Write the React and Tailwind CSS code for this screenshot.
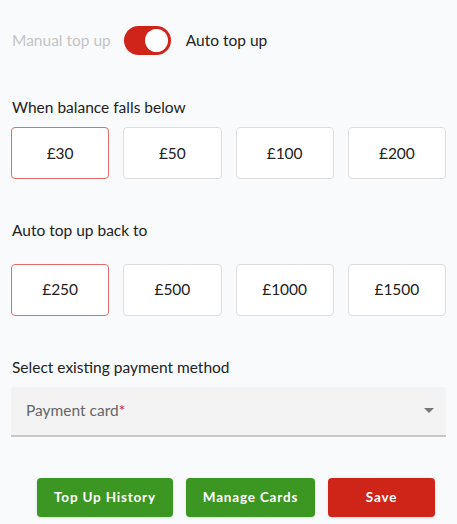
import React from "react";

const Box = ({ label, selected }) => (
  <div
    className={`flex h-[52px] items-center justify-center rounded-[4px] border bg-white text-[15.5px] text-[#222] ${
      selected ? "border-[#e06b6b]" : "border-[#dedede]"
    }`}
  >
    {label}
  </div>
);

export default function App() {
  return (
    <div
      className="min-h-[524px] w-[457px] bg-[#f9fafc] px-[11px] text-[15.5px]"
      style={{ fontFamily: "Lato, 'Open Sans', sans-serif" }}
    >
      <div className="flex items-center pt-[26px]">
        <span className="ml-px text-[#c4c4c4]">Manual top up</span>
        <div className="ml-[13px] flex h-[29px] w-[47px] items-center justify-end rounded-full bg-[#d0241a] pr-[3px]">
          <div className="h-[23px] w-[23px] rounded-full bg-white" />
        </div>
        <span className="ml-[15px] text-[#222]">Auto top up</span>
      </div>

      <div className="mt-[41px] ml-px text-[#222]">When balance falls below</div>
      <div className="mt-[8px] grid grid-cols-4 gap-[14px]">
        <Box label="£30" selected />
        <Box label="£50" />
        <Box label="£100" />
        <Box label="£200" />
      </div>

      <div className="mt-[40px] ml-px text-[#222]">Auto top up back to</div>
      <div className="mt-[21px] grid grid-cols-4 gap-[14px]">
        <Box label="£250" selected />
        <Box label="£500" />
        <Box label="£1000" />
        <Box label="£1500" />
      </div>

      <div className="mt-[40px] ml-px text-[#222]">Select existing payment method</div>
      <div className="mt-[8px] flex h-[50px] items-center justify-between rounded-t-[4px] border-b-2 border-[#c8c8c8] bg-[#f3f3f3] pl-[15px] pr-[12px]">
        <span className="text-[#666]">
          Payment card<span className="text-[#d0241a]">*</span>
        </span>
        <svg width="10" height="5" viewBox="0 0 10 5">
          <path d="M0 0 L10 0 L5 5 Z" fill="#777" />
        </svg>
      </div>

      <div className="mt-[41px] flex justify-end gap-[13px] pr-[11px]">
        <button className="h-[39px] w-[136px] rounded-[4px] bg-[#3c9622] text-[13.5px] font-bold tracking-[0.06em] text-white shadow-sm">
          Top Up History
        </button>
        <button className="h-[39px] w-[129px] rounded-[4px] bg-[#3c9622] text-[13.5px] font-bold tracking-[0.06em] text-white shadow-sm">
          Manage Cards
        </button>
        <button className="h-[39px] w-[107px] rounded-[4px] bg-[#cf2418] text-[13.5px] font-bold tracking-[0.06em] text-white shadow-sm">
          Save
        </button>
      </div>
    </div>
  );
}
